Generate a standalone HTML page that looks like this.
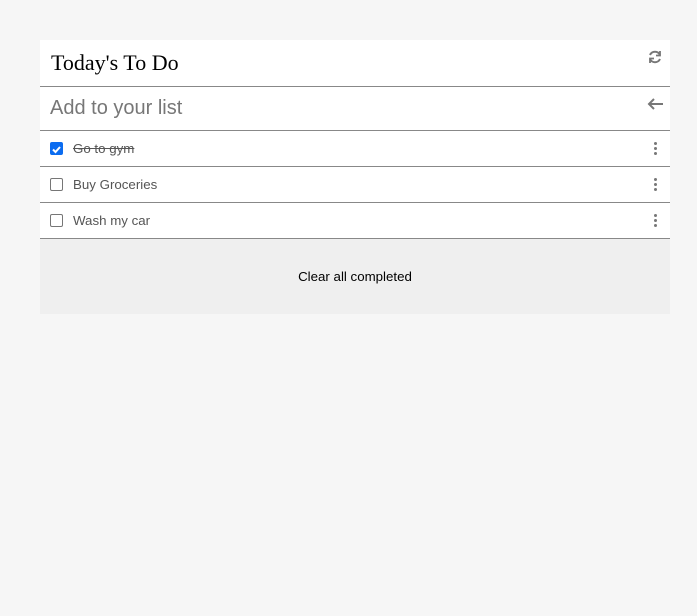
<!DOCTYPE html>
<html><head><style>
body{margin:0;background:#f6f6f6;width:697px;height:616px;overflow:hidden;font-family:"Liberation Sans",sans-serif}
.card{position:absolute;left:40px;top:40px;width:630px;background:#fff}
.hd{height:46px;border-bottom:1px solid #888;position:relative}
.hd h1{margin:0;position:absolute;left:11px;top:10px;font:22px "Liberation Serif",serif;color:#000;font-weight:normal}
.in{height:43px;border-bottom:1px solid #888;position:relative}
.in span{position:absolute;left:10px;top:10px;font-size:20px;color:#777}
.row{height:35px;border-bottom:1px solid #888;position:relative;font-size:13.3px;color:#555}
.row .cb{position:absolute;left:10px;top:11px;width:11px;height:11px;border:1px solid #767676;border-radius:2px;background:#fff}
.row .cb.on{background:#0b6cf0;border-color:#0b6cf0}
.row .t{position:absolute;left:33px;top:10px}
.dots{position:absolute;left:614px;top:11px;width:3px}
.dots i{display:block;width:3px;height:3px;background:#777;border-radius:50%;margin-bottom:2px}
.ft{height:75px;background:#efefef;text-align:center;font-size:13.3px;line-height:75px;color:#000}
svg{position:absolute}
</style></head><body>
<div class="card">
<div class="hd"><h1>Today's To Do</h1>
<svg style="left:607px;top:9px" width="16" height="16" viewBox="0 0 16 16" fill="none" stroke="#777" stroke-width="2"><path d="M13 6A5.5 5.5 0 0 0 3 6"/><path d="M3 10a5.5 5.5 0 0 0 10 0"/><path d="M13 2v4.5H9" stroke-width="1.8"/><path d="M3 14V9.5h4" stroke-width="1.8"/></svg></div>
<div class="in"><span>Add to your list</span>
<svg style="left:607px;top:10px" width="17" height="14" viewBox="0 0 17 14" fill="none" stroke="#777" stroke-width="2"><path d="M16 7H2M7 2 2 7l5 5"/></svg></div>
<div class="row"><div class="cb on"><svg width="11" height="11" viewBox="0 0 11 11" style="position:static"><path d="M2 5.5l2.5 2.5L9 3" stroke="#fff" stroke-width="2" fill="none"/></svg></div><span class="t" style="text-decoration:line-through">Go to gym</span><div class="dots"><i></i><i></i><i></i></div></div>
<div class="row"><div class="cb"></div><span class="t">Buy Groceries</span><div class="dots"><i></i><i></i><i></i></div></div>
<div class="row"><div class="cb"></div><span class="t">Wash my car</span><div class="dots"><i></i><i></i><i></i></div></div>
<div class="ft">Clear all completed</div>
</div>
</body></html>
